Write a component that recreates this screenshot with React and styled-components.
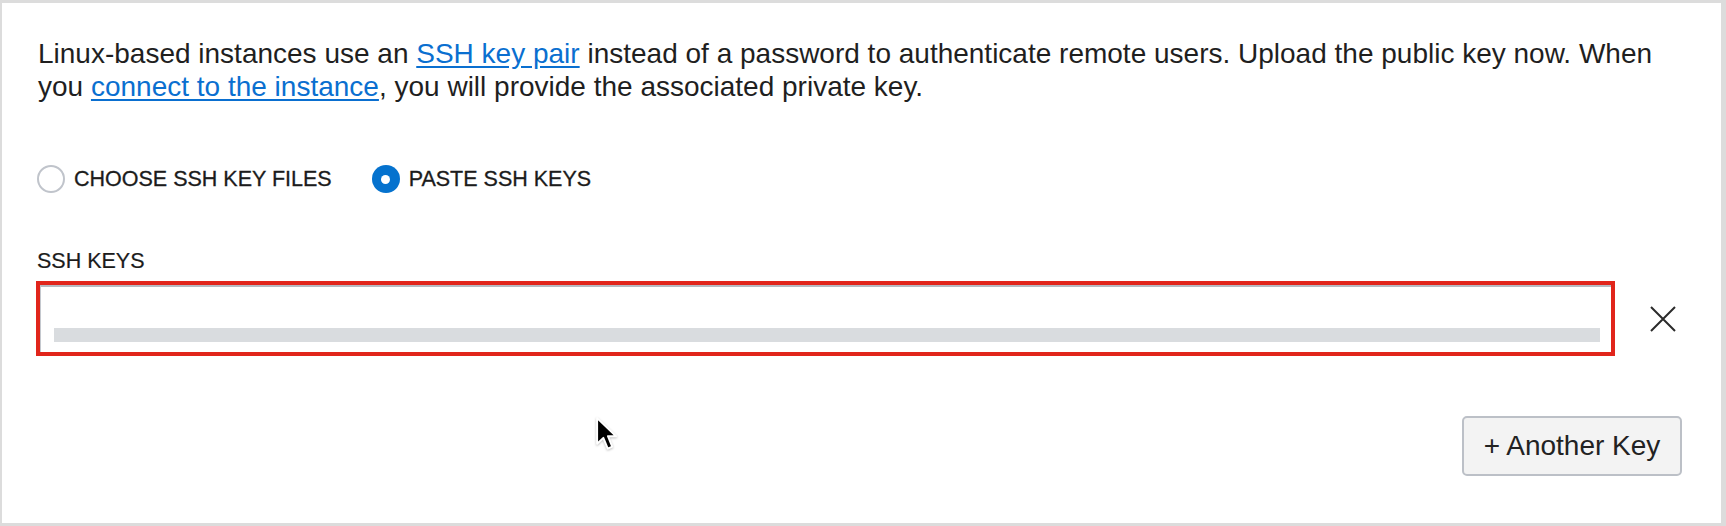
import styled, { createGlobalStyle } from "styled-components";

const Global = createGlobalStyle`
  html, body {
    margin: 0;
    padding: 0;
    background: #ffffff;
  }
  body {
    font-family: "Liberation Sans", Arial, sans-serif;
    color: #1f1f1f;
  }
`;

//--- the whole ssh key section of the create-instance form ---
const App = () => {
    return (
        <>
            <Global />
            <Panel>
                <Intro>
                    Linux-based instances use an <Link href="#">SSH key pair</Link> instead of a
                    password to authenticate remote users. Upload the public key now. When you{" "}
                    <Link href="#">connect to the instance</Link>, you will provide the associated
                    private key.
                </Intro>

                <RadioGroup>
                    <RadioOption>
                        <RadioDot />
                        <RadioText>CHOOSE SSH KEY FILES</RadioText>
                    </RadioOption>
                    <RadioOption>
                        <RadioDot $checked />
                        <RadioText>PASTE SSH KEYS</RadioText>
                    </RadioOption>
                </RadioGroup>

                <FieldLabel>SSH KEYS</FieldLabel>
                <KeyRow>
                    <KeyBox>
                        <KeyField>
                            <KeyPlaceholder />
                        </KeyField>
                    </KeyBox>
                    <RemoveButton aria-label="Remove key">
                        <svg width="26" height="26" viewBox="0 0 26 26">
                            <path d="M1 1 L25 25 M25 1 L1 25" stroke="#2b2b2b" strokeWidth="2" />
                        </svg>
                    </RemoveButton>
                </KeyRow>

                <Footer>
                    <AddButton>+ Another Key</AddButton>
                </Footer>

                <Cursor>
                    <svg width="25" height="36" viewBox="0 0 18 26">
                        <path
                            d="M1.5 1.5 L1.5 20 L6 15.8 L9.2 23.5 L12.4 22.1 L9.3 14.6 L15.2 14.6 Z"
                            fill="#000"
                            stroke="#fff"
                            strokeWidth="1.4"
                            strokeLinejoin="round"
                        />
                    </svg>
                </Cursor>
            </Panel>
        </>
    )
}

//--- Styling ---

const Panel = styled.div`
position: relative;
box-sizing: border-box;
width: 1726px;
height: 526px;
border-style: solid;
border-color: #dcdcdc;
border-width: 3px 5px 3px 2px;
padding: 34px 37px 0 35px;
display: flex;
flex-direction: column;
`

const Intro = styled.p`
margin: 0 0 0 1px;
font-size: 28px;
line-height: 33px;
color: #1f1f1f;
`

const Link = styled.a`
color: #0a6fd0;
text-decoration: underline;
text-underline-offset: 3px;
`

const RadioGroup = styled.div`
display: flex;
align-items: center;
gap: 40px;
margin-top: 62px;
height: 28px;
`

const RadioOption = styled.label`
display: flex;
align-items: center;
gap: 9px;
cursor: pointer;
`

const RadioDot = styled.span`
box-sizing: border-box;
width: 28px;
height: 28px;
border-radius: 50%;
border: ${p => p.$checked ? "none" : "2px solid #c0c4cb"};
background: ${p => p.$checked ? "#0572ce" : "#fff"};
display: flex;
align-items: center;
justify-content: center;

&::after {
    content: "";
    display: ${p => p.$checked ? "block" : "none"};
    width: 9px;
    height: 9px;
    border-radius: 50%;
    background: #fff;
}
`

const RadioText = styled.span`
font-size: 21.5px;
line-height: 24px;
color: #1c1c1c;
-webkit-text-stroke: 0.3px #1c1c1c;
`

const FieldLabel = styled.div`
margin-top: 56px;
font-size: 21.5px;
line-height: 24px;
color: #1c1c1c;
-webkit-text-stroke: 0.2px #1c1c1c;
`

const KeyRow = styled.div`
display: flex;
align-items: center;
margin-top: 8px;
`

const KeyBox = styled.div`
flex: 1;
box-sizing: border-box;
height: 75px;
margin-left: -1px;
border: 4px solid #e1251b;
`

const KeyField = styled.div`
box-sizing: border-box;
height: 100%;
border-top: 2px solid #b6bac1;
border-left: 1px solid #c4c8ce;
padding: 41px 11px 0 13px;
`

const KeyPlaceholder = styled.div`
height: 14px;
background: #d9dcdf;
`

const RemoveButton = styled.button`
width: 42px;
height: 42px;
margin-left: 27px;
padding: 0;
border: none;
background: transparent;
display: flex;
align-items: center;
justify-content: center;
cursor: pointer;
`

const Footer = styled.div`
display: flex;
justify-content: flex-end;
margin-top: 60px;
padding-right: 2px;
`

const AddButton = styled.button`
box-sizing: border-box;
width: 220px;
height: 60px;
border: 2px solid #bcc0c7;
border-radius: 5px;
background: #f3f3f3;
font-family: "Liberation Sans", Arial, sans-serif;
font-size: 28px;
color: #222;
cursor: pointer;
`

/* the mouse pointer caught in the screenshot */
const Cursor = styled.div`
position: absolute;
left: 593px;
top: 413px;
pointer-events: none;
filter: drop-shadow(0 1px 1px rgba(0,0,0,0.25));
`

export default App;
